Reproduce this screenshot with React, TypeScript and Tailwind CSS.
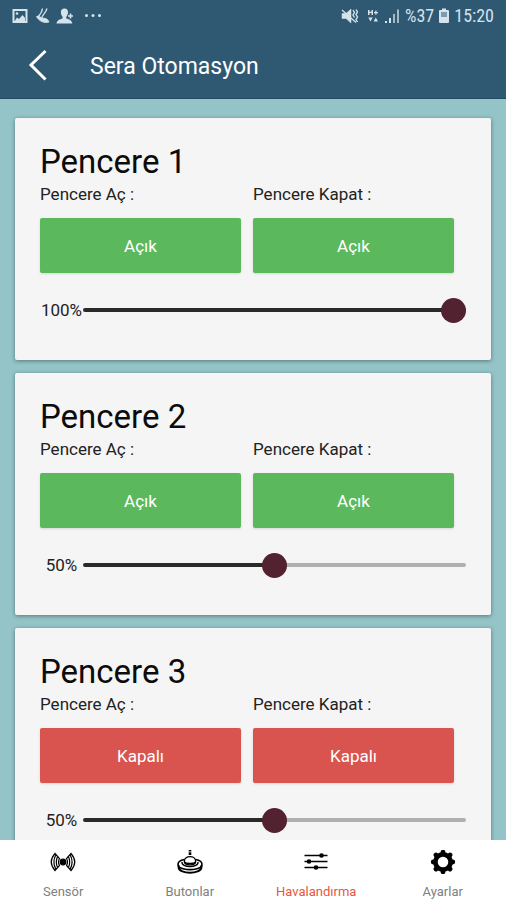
import { useState } from "react";

type Vent = {
  id: number;
  open: boolean;
  level: number;
};

const vents: Vent[] = [
  { id: 1, open: true, level: 100 },
  { id: 2, open: true, level: 50 },
  { id: 3, open: false, level: 50 },
];

const StatusBar = () => (
  <div className="flex h-8 items-center justify-between pl-3 pr-3 text-[#d5e3ec]">
    <div className="flex items-center gap-2">
      {/* Gallery */}
      <svg className="h-4 w-4" viewBox="0 0 16 16" fill="none">
        <rect x="1.5" y="2" width="13" height="12" stroke="currentColor" strokeWidth="2" />
        <path d="M3 12.5 L5 9.5 L7 11 L10.5 7 L13 10 V13 H3 Z" fill="currentColor" />
        <circle cx="5" cy="5.5" r="1.3" fill="currentColor" />
      </svg>
      {/* Shuttle */}
      <svg className="h-4 w-4" viewBox="0 0 16 16" fill="none" stroke="currentColor">
        <path d="M6.5 0.5 C6 4 4.5 6.5 1.5 9.5 M11 0.5 C10 4 8 5.5 6 9" strokeWidth="1.3" />
        <path d="M0.5 8.5 C3 7.5 4 9.5 7 10 C10 10.5 12 11 13 14 C9 15.5 3 13.5 0.5 8.5 Z" fill="currentColor" strokeWidth="0.8" />
      </svg>
      {/* Add contact */}
      <svg className="-ml-1 h-4 w-5" viewBox="0 0 20 16" fill="currentColor">
        <path d="M8.5 0.5 C11.1 0.5 12.2 2.4 12 4.8 C11.8 6.8 11 8 10.3 8.8 V10.5 C13 11.5 15.9 12 16.3 15.5 H0.5 C0.9 12 3.9 11.5 6.6 10.5 V8.8 C5.8 8 5.1 6.8 4.9 4.8 C4.7 2.4 5.9 0.5 8.5 0.5 Z" />
        <path d="M13.7 5.5 H15.3 V7.2 H17 V8.8 H15.3 V10.5 H13.7 V8.8 H12 V7.2 H13.7 Z" />
      </svg>
      <svg className="h-4 w-5" viewBox="0 0 20 16" fill="currentColor">
        <circle cx="2.5" cy="7.5" r="1.5" />
        <circle cx="9" cy="7.5" r="1.5" />
        <circle cx="15.5" cy="7.5" r="1.5" />
      </svg>
    </div>
    <div className="flex items-center gap-1">
      {/* Muted */}
      <svg className="h-4 w-5" viewBox="0 0 20 16" fill="none" stroke="currentColor">
        <path d="M1 5.5 H5 L10 1 V15 L5 10.5 H1 Z" fill="currentColor" strokeWidth="0.5" />
        <path d="M1 2 L15 14.5" strokeWidth="1.3" />
        <path d="M12 2 L13.5 4.5 L12 7 L13.5 9.5 M15 1.5 L16.5 4 L15 6.5 L16.5 9 L15 11.5 L16.5 14" strokeWidth="1.4" />
      </svg>
      {/* Mobile data */}
      <svg className="h-4 w-4" viewBox="0 0 16 16" fill="currentColor">
        <path d="M3 2 H4.5 V3.8 H6.5 V2 H8 V7 H6.5 V5 H4.5 V7 H3 Z M10.3 2.5 H11.5 V4 H13 V5.2 H11.5 V6.7 H10.3 V5.2 H9 V4 H10.3 Z" />
        <path d="M3.3 9.5 H7.7 L5.5 13.5 Z M8.6 13.5 L10.8 9.5 L13 13.5 Z" />
      </svg>
      {/* Signal */}
      <svg className="h-4 w-4" viewBox="0 0 16 16" fill="currentColor">
        <path d="M0 13 H2 V15 H0 Z M4 10 H6 V15 H4 Z" />
        <path d="M8 6 H10 V15 H8 Z M12 1.5 H14 V15 H12 Z" opacity="0.7" />
      </svg>
      <span className="font-['Roboto_Condensed',Roboto,sans-serif] text-[18px] leading-5">%37</span>
      {/* Battery */}
      <svg className="h-4 w-3" viewBox="0 0 12 16" fill="none">
        <path d="M4 0.5 H8 V2 H10 Q11 2 11 3 V14 Q11 15 10 15 H2 Q1 15 1 14 V3 Q1 2 2 2 H4 Z" fill="currentColor" />
        <path d="M3 4 H9 V9 H3 Z" fill="#7f9bae" />
      </svg>
      <span className="font-['Roboto_Condensed',Roboto,sans-serif] text-[18px] leading-5">15:20</span>
    </div>
  </div>
);

const VentCard = ({ vent }: { vent: Vent }) => {
  const [level, setLevel] = useState(vent.level);
  const label = vent.open ? "Açık" : "Kapalı";
  const color = vent.open ? "bg-[#5cb85c]" : "bg-[#d9534f]";
  const sliderId = `vent-${vent.id}`;

  return (
    <section className="shrink-0 rounded-xs bg-[#f5f5f5] pt-6 pr-[25px] pb-[38px] pl-[25px] shadow-[0_1px_4px_rgba(0,0,0,0.4)]">
      <h2 className="text-[33px] leading-10 text-[#0c0c0c]">Pencere {vent.id}</h2>
      <div className="mr-3 grid grid-cols-2 gap-x-3 gap-y-3 text-[17px] leading-6 text-[#222]">
        <p>Pencere Aç :</p>
        <p>Pencere Kapat :</p>
        <button className={`h-[55px] rounded-xs text-white shadow-sm ${color}`}>{label}</button>
        <button className={`h-[55px] rounded-xs text-white shadow-sm ${color}`}>{label}</button>
      </div>
      <div className="mt-[25px] flex h-6 items-center">
        <label htmlFor={sliderId} className="w-[43px] text-center text-[17px] leading-6 text-[#222]">
          {level}%
        </label>
        <input
          id={sliderId}
          type="range"
          min={0}
          max={100}
          value={level}
          onChange={(e) => setLevel(Number(e.target.value))}
          className="h-1 min-w-0 flex-1 appearance-none rounded-full [&::-webkit-slider-thumb]:h-[25px] [&::-webkit-slider-thumb]:w-[25px] [&::-webkit-slider-thumb]:appearance-none [&::-webkit-slider-thumb]:rounded-full [&::-webkit-slider-thumb]:bg-[#522230]"
          style={{ background: `linear-gradient(to right, #2a2a2a ${level}%, #b0b0b0 ${level}%)` }}
        />
      </div>
    </section>
  );
};

const SensorIcon = () => (
  <svg className="h-6 w-7" viewBox="0 0 28 24" fill="none" stroke="currentColor" strokeWidth="1.2">
    <circle cx="14" cy="12" r="2.8" fill="currentColor" />
    <path d="M10.5 8.5 Q8.5 12 10.5 15.5 L6 20.5 Q-1.5 12 6 3.5 Z" />
    <path d="M8.6 6.5 Q6 12 8.6 17.5 M6.8 5 Q3 12 6.8 19" />
    <path d="M17.5 8.5 Q19.5 12 17.5 15.5 L22 20.5 Q29.5 12 22 3.5 Z" />
    <path d="M19.4 6.5 Q22 12 19.4 17.5 M21.2 5 Q25 12 21.2 19" />
  </svg>
);

const ButtonsIcon = () => (
  <svg className="h-6 w-7" viewBox="0 0 28 24" fill="none" stroke="currentColor" strokeWidth="1.3">
    <path d="M14 0 V5" strokeWidth="2.6" strokeDasharray="1.6 0.7 4" />
    <path d="M8.3 11.5 C8.3 5 19.7 5 19.7 11.5 C19.7 16 8.3 16 8.3 11.5 Z" />
    <path d="M8.5 12 C10 14 18 14 19.5 12" />
    <path d="M8.3 9.5 C0 11 0 17.5 8 19 C12 19.8 16 19.8 20 19 C28 17.5 28 11 19.7 9.5" strokeWidth="1.6" />
    <path d="M6 12 C5 18 23 18 22 12" />
    <path d="M2.5 15 V17.5 C3.5 24.5 24.5 24.5 25.5 17.5 V15" strokeWidth="1.8" />
  </svg>
);

const VentIcon = () => (
  <svg className="h-6 w-7" viewBox="0 0 28 24" fill="none" stroke="currentColor">
    <path d="M2.5 5.5 H25.5 M2.5 11.5 H25.5 M2.5 17.5 H25.5" strokeWidth="1.6" />
    <circle cx="19.5" cy="5.5" r="2.3" fill="currentColor" stroke="none" />
    <circle cx="7" cy="11.5" r="2.3" fill="currentColor" stroke="none" />
    <circle cx="14" cy="17.5" r="2.3" fill="currentColor" stroke="none" />
  </svg>
);

const SettingsIcon = () => (
  <svg className="h-6 w-7" viewBox="0 0 28 24" fill="none" stroke="currentColor" strokeLinecap="round">
    <circle cx="14" cy="12" r="7.6" strokeWidth="4.6" />
    <path
      d="M14 3 V2.2 M14 21 V21.8 M5 12 H4.2 M23 12 H23.8 M8 6 L7 5 M20 18 L21 19 M8 18 L7 19 M20 6 L21 5"
      strokeWidth="4.8"
    />
  </svg>
);

const tabs = [
  { name: "Sensör", icon: <SensorIcon /> },
  { name: "Butonlar", icon: <ButtonsIcon /> },
  { name: "Havalandırma", icon: <VentIcon /> },
  { name: "Ayarlar", icon: <SettingsIcon /> },
];

export default function App() {
  const [active, setActive] = useState("Havalandırma");

  return (
    <div className="flex h-screen flex-col bg-[#94c4c8] font-[Roboto,sans-serif]">
      <header className="shrink-0 border-b border-[#254a63] bg-[#2f5873]">
        <StatusBar />
        <div className="flex h-[66px] items-center gap-[42px] pl-6">
          <button aria-label="Geri" className="text-white">
            <svg className="h-8 w-6" viewBox="0 0 24 32" fill="none" stroke="currentColor" strokeWidth="3">
              <path d="M21.5 2 L7 16 L21.5 30.5" />
            </svg>
          </button>
          <h1 className="pt-1 text-[23px] leading-8 text-white">Sera Otomasyon</h1>
        </div>
      </header>

      <main className="flex min-h-0 flex-1 flex-col gap-[13px] overflow-hidden px-[15px] pt-[19px]">
        {vents.map((vent) => (
          <VentCard key={vent.id} vent={vent} />
        ))}
      </main>

      {/* Bottom tabs */}
      <nav className="relative grid h-[60px] shrink-0 grid-cols-4 bg-white">
        {tabs.map((tab) => (
          <button
            key={tab.name}
            onClick={() => setActive(tab.name)}
            className="flex flex-col items-center gap-2 pt-[10px] text-black"
          >
            {tab.icon}
            <span className={`text-[13px] leading-5 ${active === tab.name ? "text-[#e8573f]" : "text-[#808080]"}`}>
              {tab.name}
            </span>
          </button>
        ))}
      </nav>
    </div>
  );
}
